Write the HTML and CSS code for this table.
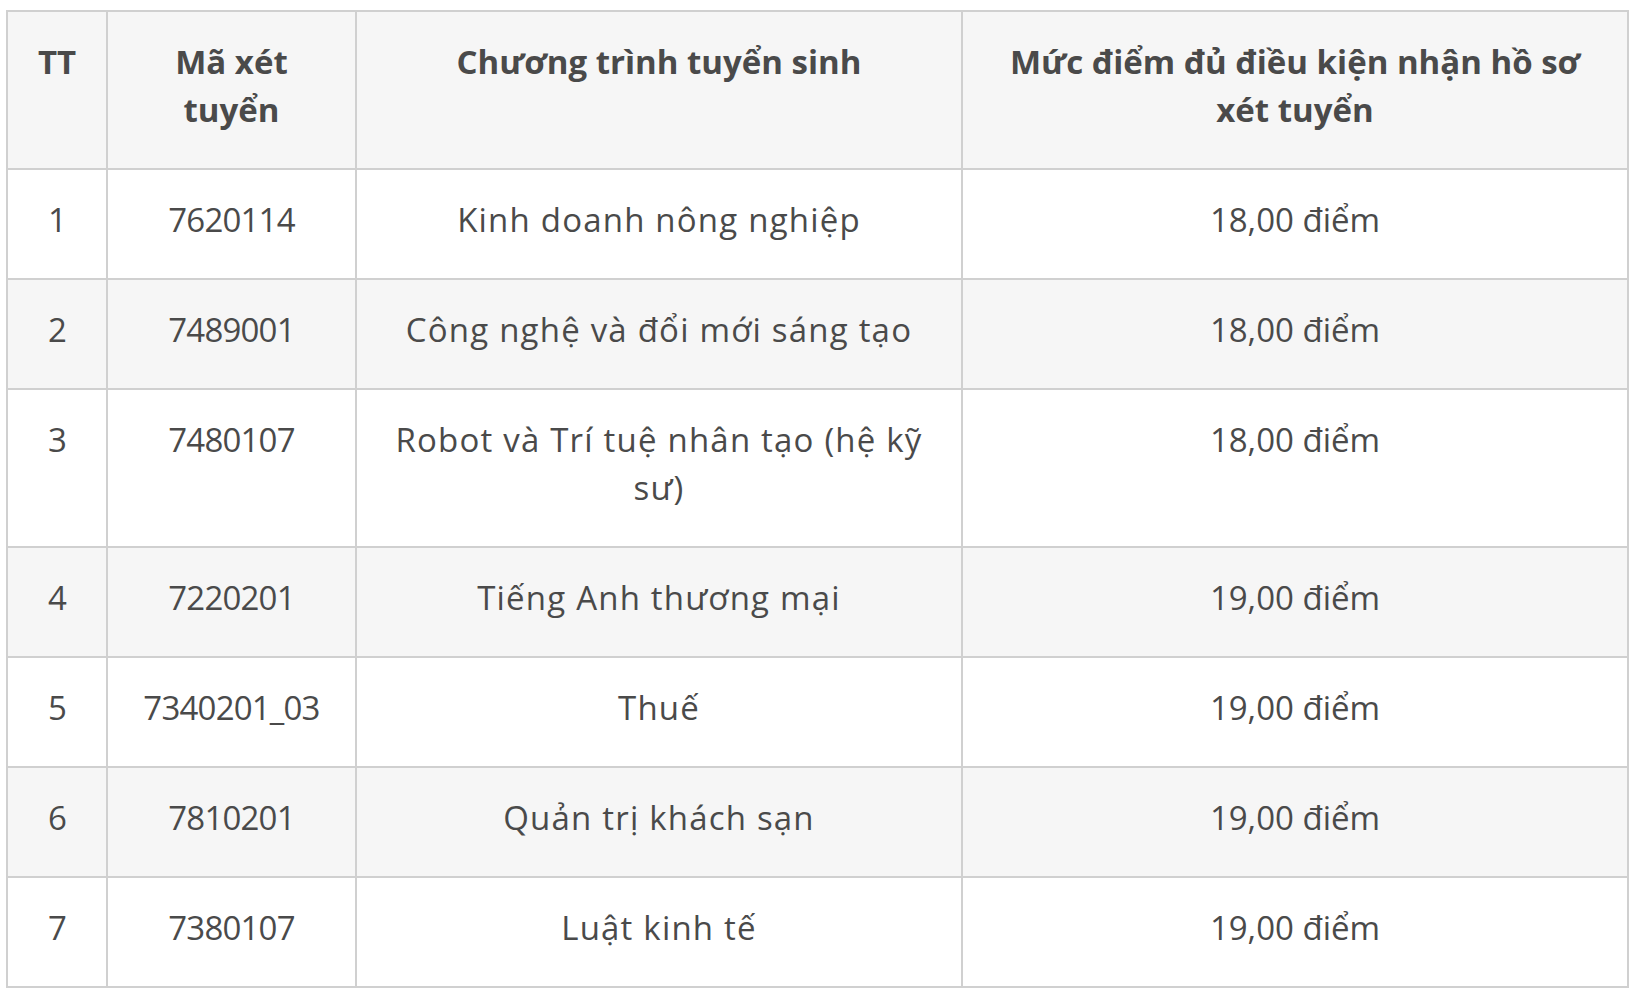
FILE: index.html
```html
<!DOCTYPE html>
<html lang="vi">
<head>
<meta charset="utf-8">
<link rel="stylesheet" href="styles.css">
</head>
<body>
<table class="score-table">
  <colgroup>
    <col class="c1"><col class="c2"><col class="c3"><col class="c4">
  </colgroup>
  <thead>
    <tr>
      <th>TT</th>
      <th>Mã xét tuyển</th>
      <th>Chương trình tuyển sinh</th>
      <th>Mức điểm đủ điều kiện nhận hồ sơ xét tuyển</th>
    </tr>
  </thead>
  <tbody>
    <tr><td class="num">1</td><td class="num">7620114</td><td>Kinh doanh nông nghiệp</td><td class="score">18,00 điểm</td></tr>
    <tr class="alt"><td class="num">2</td><td class="num">7489001</td><td>Công nghệ và đổi mới sáng tạo</td><td class="score">18,00 điểm</td></tr>
    <tr><td class="num">3</td><td class="num">7480107</td><td>Robot và Trí tuệ nhân tạo (hệ kỹ sư)</td><td class="score">18,00 điểm</td></tr>
    <tr class="alt"><td class="num">4</td><td class="num">7220201</td><td>Tiếng Anh thương mại</td><td class="score">19,00 điểm</td></tr>
    <tr><td class="num">5</td><td class="num">7340201_03</td><td>Thuế</td><td class="score">19,00 điểm</td></tr>
    <tr class="alt"><td class="num">6</td><td class="num">7810201</td><td>Quản trị khách sạn</td><td class="score">19,00 điểm</td></tr>
    <tr><td class="num">7</td><td class="num">7380107</td><td>Luật kinh tế</td><td class="score">19,00 điểm</td></tr>
  </tbody>
</table>
</body>
</html>
```
FILE: styles.css
```css
html, body {
  margin: 0;
  padding: 0;
  background: #ffffff;
}
body {
  padding: 10px 0 0 6px;
  font-family: "Open Sans", "Noto Sans", sans-serif;
  color: #4a4a4a;
}
.score-table {
  border-collapse: collapse;
  width: 1621px;
  table-layout: fixed;
  font-size: 33px;
  line-height: 48px;
  letter-spacing: 1.2px;
}
.c1 { width: 100px; }
.c2 { width: 249px; }
.c3 { width: 606px; }
.c4 { width: 666px; }
.score-table th,
.score-table td {
  border: 2px solid #d0d0d0;
  padding: 26px 28px 34px 28px;
  text-align: center;
  vertical-align: top;
}
.score-table th {
  background: #f6f6f6;
  font-weight: 700;
  letter-spacing: 0;
}
.score-table td.num {
  letter-spacing: -0.8px;
}
.score-table td.score {
  letter-spacing: 0;
}
.score-table tr.alt td {
  background: #f6f6f6;
}
```
